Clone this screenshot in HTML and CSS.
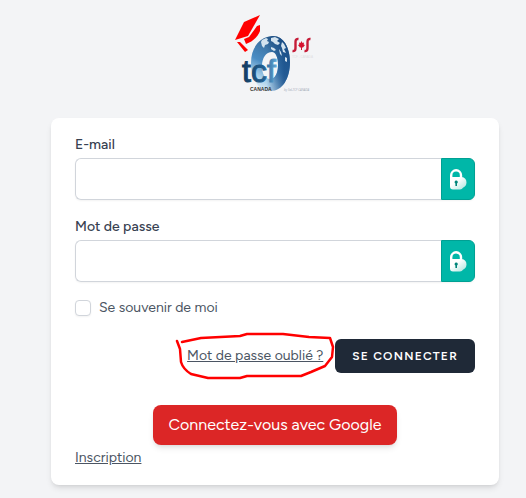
FILE: index.html
```
<!DOCTYPE html>
<html lang="fr">
<head>
<meta charset="utf-8">
<meta name="viewport" content="width=device-width, initial-scale=1">
<title>Connexion</title>
<link rel="stylesheet" href="styles.css">
</head>
<body>
<svg class="defs" width="0" height="0" aria-hidden="true">
  <defs>
    <linearGradient id="lock-fill" x1="0" y1="0" x2="1" y2="1">
      <stop offset="0.35" stop-color="#fff"/>
      <stop offset="1" stop-color="#a9e3dc"/>
    </linearGradient>
    <symbol id="lock" viewBox="0 0 18 21">
      <path d="M2.2 10V6.2a4.9 4.9 0 0 1 9.8 0V9" fill="none" stroke="#fff" stroke-width="2.4"/>
      <path d="M3 8h9.5a5.6 5.6 0 0 1 5 5.500a6 6 0 0 1-3.500 5.200Q13 20.500 11 20.500H4Q1 20.500 1 17.500V9z" fill="url(#lock-fill)"/>
      <path d="M7.200 11.500a1.600 1.600 0 0 1 .8 3V17H6.400v-2.500a1.600 1.600 0 0 1 .8-3z" fill="#00857a"/>
    </symbol>
  </defs>
</svg>
<main class="page">
  <a class="logo" href="#" aria-label="TCF Canada">
    <svg viewBox="0 0 80 80" width="80" height="80">
      <defs>
        <linearGradient id="ring" x1="0.7" y1="0" x2="0.3" y2="1">
          <stop offset="0" stop-color="#1d4a7c"/>
          <stop offset="0.3" stop-color="#3f78aa"/>
          <stop offset="0.55" stop-color="#4b8dc4"/>
          <stop offset="0.8" stop-color="#a8cfea"/>
          <stop offset="1" stop-color="#dcecf8"/>
        </linearGradient>
        <linearGradient id="ring-side" x1="0" y1="0" x2="1" y2="0">
          <stop offset="0.4" stop-color="#174d88" stop-opacity="0"/>
          <stop offset="0.85" stop-color="#174d88" stop-opacity="0.8"/>
        </linearGradient>
        <linearGradient id="word" x1="0" y1="0" x2="1" y2="0">
          <stop offset="0" stop-color="#123a5e"/>
          <stop offset="0.65" stop-color="#225f91"/>
          <stop offset="1" stop-color="#5fa3d3"/>
        </linearGradient>
        <path id="ring-shape" fill-rule="evenodd" d="M37 22c11-1 18 11 18 26c0 17-8 29-19 29c-12 0-20-11-20-28c0-16 9-26 21-27zM37 38c-6 0-10 6-10 14s3 13 8 13c5 0 8-6 8-14c0-7-2-13-6-13z"/>
      </defs>
      <use href="#ring-shape" fill="url(#ring)"/>
      <use href="#ring-shape" fill="url(#ring-side)"/>
      <g fill="#d3e3ef">
        <path d="M27 26l4-2 2 1-1 2 2 1-1 2-3 1-1 3-2-2-1-4z"/>
        <path d="M36 24l4-1 4 2-2 2 3 2-2 2-3-1-2-2-2-1z"/>
        <path d="M47 28l2 2 2 4-2 1 2 4-3-1-1-4-1-2z"/>
        <path d="M36 33l3 1 2 2-2 1-3-2zM44 35l2 3 1 4-2-2zM50 43l2 1 0 4-2-1z"/>
      </g>
      <path fill="#f00" d="M0 26L9 8L25 1L13 22z"/>
      <path fill="#f00" d="M9 25L14 23L22 12L25 11V17C23 23 17 28 11 30zM2 28L5 28L13 36L10 38z"/>
      <text class="logo-word" x="7" y="68" fill="url(#word)" stroke="url(#word)">tcf</text>
      <text class="logo-country" x="15" y="77">CANADA</text>
      <text class="logo-note" x="49" y="77">by Sol-TCF CANADA</text>
      <g fill="none" stroke="#c51c38" stroke-width="2.400">
        <path d="M63.500 25C60 24.500 60.500 27 60.500 31S61 37.500 57.500 37"/>
        <path d="M75.500 25C72 24.500 72.500 27 72.500 31S73 37.500 69.500 37"/>
      </g>
      <path fill="#d51230" d="M66.500 27l1 2 1.500-.5-.3 2 1.300.5-2 2.500h-3l-2-2.500 1.300-.5-.3-2 1.500.5z"/>
      <path d="M66.500 32v4" stroke="#d51230"/>
      <text class="logo-mini" x="57" y="44">TCF - CANADA</text>
    </svg>
  </a>
  <form class="card">
    <div class="field">
      <label class="field-label" for="email">E-mail</label>
      <div class="control">
        <input class="control-input" id="email" type="email">
        <button class="control-lock" type="button" aria-label="Remplir l’e-mail"><svg width="18" height="21"><use href="#lock"/></svg></button>
      </div>
    </div>
    <div class="field">
      <label class="field-label" for="password">Mot de passe</label>
      <div class="control">
        <input class="control-input" id="password" type="password">
        <button class="control-lock" type="button" aria-label="Remplir le mot de passe"><svg width="18" height="21"><use href="#lock"/></svg></button>
      </div>
    </div>
    <div class="remember">
      <input class="remember-box" id="remember" type="checkbox">
      <label for="remember">Se souvenir de moi</label>
    </div>
    <div class="actions">
      <span class="marked">
        <a class="link" href="#">Mot de passe oublié ?</a>
        <svg class="marker" viewBox="0 0 160 50" width="160" height="50" aria-hidden="true">
          <path d="M2 10L5 18L6 31Q8 38 16 43L33 47L65 47L72 45L126 45L136 41L150 35L157 26L158 16L155 7L134 6L108 3L72 3L65 5L26 7L7 11"/>
        </svg>
      </span>
      <button class="submit" type="submit">Se connecter</button>
    </div>
    <div class="social">
      <a class="google" href="#">Connectez-vous avec Google</a>
    </div>
    <div class="signup"><a class="link" href="#">Inscription</a></div>
  </form>
</main>
</body>
</html>
```
FILE: styles.css
```
*, *::before, *::after { box-sizing: border-box; }

body {
  margin: 0;
  background: #f3f4f6;
  color: #374151;
  font-family: Figtree, Inter, sans-serif;
  font-size: 14px;
  line-height: 20px;
}

.defs { position: absolute; }

.page {
  display: flex;
  flex-direction: column;
  align-items: center;
  gap: 24px;
  padding: 14px 0 12px 24px;
}

.logo, .logo svg { display: block; }
.logo svg { overflow: visible; }
.logo-word { font: 32px "Liberation Sans", sans-serif; stroke-width: 1px; }
.logo-country { font: 700 5px "Liberation Sans", sans-serif; fill: #333; }
.logo-note { font: italic 3px "Open Sans", sans-serif; fill: #a4abb8; }
.logo-mini { font: 3px "Liberation Sans", sans-serif; fill: #e0dfe3; }

.card {
  width: 100%;
  max-width: 448px;
  padding: 16px 24px;
  background: #fff;
  border-radius: 8px;
  box-shadow: 0 4px 6px -1px rgb(0 0 0 / 0.1), 0 2px 4px -2px rgb(0 0 0 / 0.1);
}

.field { margin-bottom: 16px; }
.field-label { display: block; padding-top: 1px; margin-bottom: 3px; font-weight: 500; }

.control {
  display: flex;
  height: 42px;
  border-radius: 6px;
  box-shadow: 0 1px 2px rgb(0 0 0 / 0.05);
}

.control-input {
  flex: 1;
  min-width: 0;
  padding: 8px 12px;
  border: 1px solid #d1d5db;
  border-right: 0;
  border-radius: 6px 0 0 6px;
  background: #fff;
  font: inherit;
}

.control-lock {
  display: flex;
  align-items: center;
  justify-content: center;
  width: 34px;
  padding: 0;
  border: 1px solid #00a093;
  border-radius: 0 6px 6px 0;
  background: #00b7a8;
}

.remember {
  display: flex;
  align-items: center;
  gap: 8px;
  color: #4b5563;
}

.remember-box {
  appearance: none;
  width: 16px;
  height: 16px;
  margin: 0;
  border: 1px solid #d1d5db;
  border-radius: 4px;
  background: #fff;
  box-shadow: 0 1px 2px rgb(0 0 0 / 0.05);
}

.actions {
  display: flex;
  align-items: center;
  justify-content: flex-end;
  gap: 12px;
  margin-top: 21px;
}

.link { color: #4b5563; text-decoration: underline; }

.marked { position: relative; }

.marker {
  position: absolute;
  top: -15px;
  right: -12px;
  pointer-events: none;
}

.marker path {
  fill: none;
  stroke: #f00;
  stroke-width: 2.5;
  stroke-linecap: round;
  stroke-linejoin: round;
}

.submit {
  height: 34px;
  padding: 0 16px;
  border: 1px solid transparent;
  border-radius: 6px;
  background: #1f2937;
  color: #fff;
  font: 600 12px/16px Figtree, Inter, sans-serif;
  letter-spacing: 0.1em;
  text-transform: uppercase;
}

.social {
  display: flex;
  justify-content: center;
  margin-top: 32px;
}

.google {
  padding: 8px 16px;
  border-radius: 8px;
  background: #dc2626;
  box-shadow: 0 4px 6px -1px rgb(0 0 0 / 0.1), 0 2px 4px -2px rgb(0 0 0 / 0.1);
  color: #fff;
  font-size: 16px;
  line-height: 24px;
  text-decoration: none;
}

.signup { padding-top: 2px; line-height: 22px; }
```
